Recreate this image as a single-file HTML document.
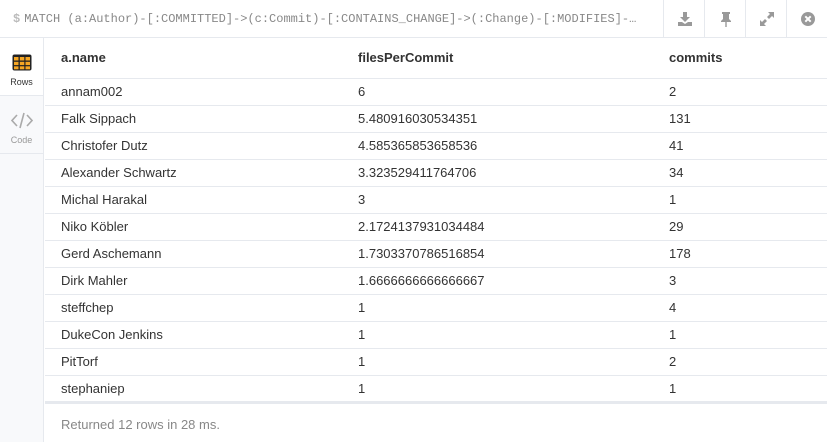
<!DOCTYPE html>
<html><head><meta charset="utf-8"><style>
*{margin:0;padding:0;box-sizing:border-box}
body{width:827px;height:442px;background:#fff;font-family:"Liberation Sans",sans-serif;overflow:hidden;position:relative;color:#333}
.hdr{position:absolute;left:0;top:0;width:827px;height:38px;border-bottom:1px solid #e6e9ee;background:#fff}
.q{position:absolute;left:13px;top:12px;font-family:"Liberation Mono",monospace;font-size:12px;color:#888;white-space:nowrap;letter-spacing:0}
.q b{color:#bbb;font-weight:bold;margin-right:4px}
.ib{position:absolute;top:0;height:38px;border-left:1px solid #e6e9ee;width:41px}
.ib svg{position:absolute;left:13px;top:11px}
.side{position:absolute;left:0;top:38px;width:44px;height:404px;background:#f8f9fb;border-right:1px solid #e6e9ee}
.tab{position:absolute;left:0;width:43px;height:58px;border-bottom:1px solid #e6e9ee;font-size:9px;color:#999}
.tab.on{background:#fff;color:#333}
.tab svg{position:absolute}
.tab span{position:absolute;left:0;width:43px;text-align:center;top:38px;line-height:10px}
table{position:absolute;left:45px;top:38px;width:782px;border-collapse:collapse;font-size:13px}
th{height:40px;text-align:left;font-weight:bold;padding-left:16px;border-bottom:1px solid #e6e9ee;color:#333}
td{height:27px;padding-left:16px;border-bottom:1px solid #e6e9ee;color:#333}
tr:last-child td{border-bottom:3px solid #e6e9ee}
.ft{position:absolute;left:61px;top:417px;font-size:13px;color:#888}
</style></head><body>
<div class="hdr"><div class="q"><b>$</b>MATCH (a:Author)-[:COMMITTED]-&gt;(c:Commit)-[:CONTAINS_CHANGE]-&gt;(:Change)-[:MODIFIES]-…</div>
<div class="ib" style="left:663px"><svg width="16" height="16" viewBox="0 0 16 16"><path d="M6 1h4v5h3l-5 5-5-5h3z" fill="#999"/><path d="M1 11h4l3 2 3-2h4v4H1z" fill="#999"/></svg></div>
<div class="ib" style="left:704px"><svg width="16" height="16" viewBox="0 0 16 16"><path d="M4 1h8v2h-1v5l2 2v1H3v-1l2-2V3H4z" fill="#999"/><rect x="7.3" y="11" width="1.4" height="5" fill="#999"/></svg></div>
<div class="ib" style="left:745px"><svg width="16" height="16" viewBox="0 0 16 16"><path d="M9 1h6v6l-2-2-3 3-2-2 3-3zM7 15H1V9l2 2 3-3 2 2-3 3z" fill="#999"/></svg></div>
<div class="ib" style="left:786px"><svg width="16" height="16" viewBox="0 0 16 16"><circle cx="8" cy="8" r="7" fill="#999"/><path d="M5.3 5.3l5.4 5.4M10.7 5.3l-5.4 5.4" stroke="#fff" stroke-width="2"/></svg></div>
</div>
<div class="side">
<div class="tab on" style="top:0"><svg style="left:12px;top:16px" width="20" height="17" viewBox="0 0 20 17"><rect x="0.5" y="0.5" width="19" height="16" rx="2" fill="#222"/><g fill="#f5a623"><rect x="2" y="3" width="4.5" height="3.5"/><rect x="7.8" y="3" width="4.5" height="3.5"/><rect x="13.5" y="3" width="4.5" height="3.5"/><rect x="2" y="7.8" width="4.5" height="3.3"/><rect x="7.8" y="7.8" width="4.5" height="3.3"/><rect x="13.5" y="7.8" width="4.5" height="3.3"/><rect x="2" y="12.3" width="4.5" height="3"/><rect x="7.8" y="12.3" width="4.5" height="3"/><rect x="13.5" y="12.3" width="4.5" height="3"/></g></svg><span style="top:39px">Rows</span></div>
<div class="tab" style="top:58px"><svg style="left:11px;top:16px" width="22" height="17" viewBox="0 0 22 17"><path d="M6 3L1 8.5 6 14M16 3l5 5.5L16 14M13 1L9 16" stroke="#aaa" stroke-width="1.6" fill="none"/></svg><span style="top:39px">Code</span></div>
</div>
<table>
<tr><th style="width:297px">a.name</th><th style="width:311px">filesPerCommit</th><th>commits</th></tr>
<tr><td>annam002</td><td>6</td><td>2</td></tr>
<tr><td>Falk Sippach</td><td>5.480916030534351</td><td>131</td></tr>
<tr><td>Christofer Dutz</td><td>4.585365853658536</td><td>41</td></tr>
<tr><td>Alexander Schwartz</td><td>3.323529411764706</td><td>34</td></tr>
<tr><td>Michal Harakal</td><td>3</td><td>1</td></tr>
<tr><td>Niko Köbler</td><td>2.1724137931034484</td><td>29</td></tr>
<tr><td>Gerd Aschemann</td><td>1.7303370786516854</td><td>178</td></tr>
<tr><td>Dirk Mahler</td><td>1.6666666666666667</td><td>3</td></tr>
<tr><td>steffchep</td><td>1</td><td>4</td></tr>
<tr><td>DukeCon Jenkins</td><td>1</td><td>1</td></tr>
<tr><td>PitTorf</td><td>1</td><td>2</td></tr>
<tr><td>stephaniep</td><td>1</td><td>1</td></tr>
</table>
<div class="ft">Returned 12 rows in 28 ms.</div>
</body></html>
